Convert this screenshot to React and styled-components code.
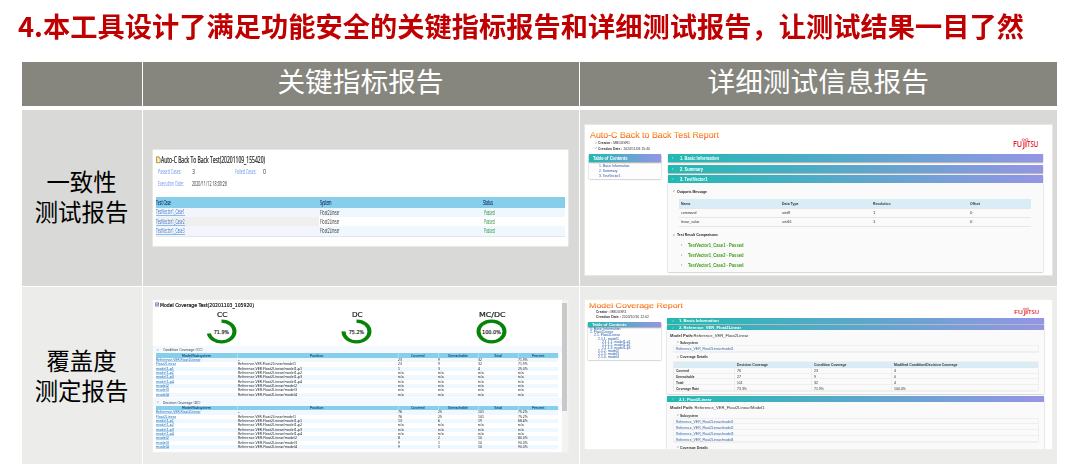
import React, { useLayoutEffect, useRef, useState } from 'react';
import styled, { createGlobalStyle } from 'styled-components';

const GlobalStyle = createGlobalStyle`
  * { box-sizing: border-box; }
  body {
    margin: 0;
    background: #fff;
    font-family: "Liberation Sans", "Noto Sans CJK SC", sans-serif;
    overflow: hidden;
  }
`;

const Holder = styled.span`
  display: block;
  flex: none;
  width: ${p => p.$w}px;
  height: 1.2em;
  line-height: 1.2;
  white-space: pre;
`;

const Inner = styled.span`
  display: block;
  width: max-content;
  font-size: 4em;
  transform-origin: 0 0;
`;

// text set at four times its size, then scaled down to fill a given width
const Fit = ({ w, children, className }) => {
  const ref = useRef(null);
  const [scale, setScale] = useState(0.25);
  useLayoutEffect(() => {
    ref.current.style.transform = 'none';
    const real = ref.current.getBoundingClientRect().width;
    if (real) {
      ref.current.style.transform = `scale(${w / real}, 0.25)`;
      setScale(w / real);
    }
  }, [w]);
  return (
    <Holder $w={w} className={className}>
      <Inner ref={ref} style={{ transform: `scale(${scale}, 0.25)` }}>
        {children}
      </Inner>
    </Holder>
  );
};

const Page = styled.main`
  width: 1080px;
  height: 467px;
  padding-left: 21.5px;
`;

const Title = styled.h1`
  display: flex;
  align-items: center;
  height: 62px;
  margin: 0 0 0 -4px;
  padding-bottom: 12px;
  color: #c00000;
  font: bold 27px "Noto Sans CJK SC", sans-serif;
`;

const Board = styled.div`
  display: grid;
  width: 1035.5px;
  grid-template-columns: 120px 436px 477.5px;
  column-gap: 1px;
  row-gap: 1px;
`;

const HeadBoard = styled(Board)`
  grid-template-rows: 43.5px;
  margin-bottom: 4.9px;
`;

const BodyBoard = styled(Board)`
  grid-template-rows: 175.3px 177.5px;
`;

const Head = styled.div`
  display: flex;
  justify-content: center;
  padding-top: 2px;
  background: #86867e;
  color: #fff;
  font: 27.7px/33px "Noto Sans CJK SC", sans-serif;
`;

const Cell = styled.div`
  background: ${p => (p.$light ? '#ececea' : '#d9d9d7')};
  padding: ${p => p.$pad || 0};
`;

const Label = styled(Cell)`
  display: flex;
  flex-direction: column;
  align-items: center;
  gap: 2px;
  color: #000;
  font: 23.4px/28px "Noto Sans CJK SC", sans-serif;
`;

const Sheet = styled.section`
  width: ${p => p.$w}px;
  height: ${p => p.$h}px;
  background: #fff;
  overflow: hidden;
  box-shadow: 0 0 0 0.6px #f1f1f1;
`;

const Line = styled.div`
  display: flex;
  align-items: center;
  height: ${p => p.$h}px;
  padding-left: ${p => p.$x || 0}px;
  margin-top: ${p => p.$mt || 0}px;
  font-size: ${p => p.$size || 5}px;
  font-weight: ${p => (p.$bold ? 'bold' : 'normal')};
  color: ${p => p.$color || '#333'};
  background: ${p => p.$bg || 'none'};
`;

const Cols = styled(Line)`
  display: grid;
  grid-template-columns: ${p => p.$cols};
`;

/* ---------- back to back test ---------- */

const CaseSheet = styled(Sheet)`
  font-family: "Open Sans", "Noto Sans", sans-serif;
`;

const CaseTitle = styled(Line)`
  gap: 0.6px;
  -webkit-text-stroke: 0.9px #1d1d1d;
`;

const CaseTable = styled.div`
  width: 409.5px;
  margin: 6.7px 0 0 2.5px;
  border-bottom: 1px solid #e3e6ea;
`;

const CaseHead = styled(Cols)`
  -webkit-text-stroke: 0.5px #142b62;
`;

const CaseLink = styled(Fit)`
  height: 8px;
  color: #3575c8;
  border-bottom: 0.7px solid #8cbbe8;
`;

const CaseName = styled.div`
  display: flex;
  align-items: center;
  height: 100%;
  padding-left: 0.5px;
  background: ${p => p.$bg};
`;

const Passed = styled(Fit)`
  color: #2f8d3a;
`;

const Value = styled(Fit)`
  color: #333;
`;

const BackToBack = () => (
  <CaseSheet $w={414.5} $h={96}>
    <CaseTitle $h={13} $mt={3.7} $x={2.5} $size={8.4} $color="#1d1d1d">
      <svg width="5" height="7.5" viewBox="0 0 5.5 8">
        <path d="M.5.8h2.7L4.6 2.4v4.8H.5z" fill="#fff6c8" stroke="#8d7430" strokeWidth=".8" />
        <path d="M1 1v6M3 1v1.7h1.5" stroke="#c9a83c" strokeWidth=".6" fill="none" />
      </svg>
      <Fit w={104}>Auto-C Back To Back Test(20201109_155420)</Fit>
    </CaseTitle>
    <Cols $h={12} $x={5} $size={6.3} $color="#6c97ea" $cols="34px 43px 28px 20px">
      <Fit w={23.5}>Passed Cases:</Fit>
      <Value w={3}>3</Value>
      <Fit w={21.5}>Failed Cases:</Fit>
      <Value w={3}>0</Value>
    </Cols>
    <Cols $h={12} $x={5} $size={6.3} $color="#6c97ea" $cols="34px 60px">
      <Fit w={26}>Execution Date:</Fit>
      <Value w={35}>2020/11/12 18:00:26</Value>
    </Cols>
    <CaseTable>
      <CaseHead $h={10.7} $bg="#87ceeb" $size={6.3} $color="#142b62" $cols="164px 163.5px 80px">
        <Fit w={15}>Test Case</Fit>
        <Fit w={11.5}>System</Fit>
        <Fit w={10}>Status</Fit>
      </CaseHead>
      {[1, 2, 3].map(n => (
        <Cols
          key={n}
          $h={9.4}
          $size={6.3}
          $bg={n === 2 ? '#fff' : '#eff7ff'}
          $cols="163px 1.5px 163.5px 80px"
        >
          <CaseName $bg={n === 2 ? '#efefef' : '#f2f5fb'}>
            <CaseLink w={28.5}>{`TestVector1_Case${n}`}</CaseLink>
          </CaseName>
          <span />
          <Fit w={19.5}>Float2Linear</Fit>
          <Passed w={10.7}>Passed</Passed>
        </Cols>
      ))}
    </CaseTable>
  </CaseSheet>
);

/* ---------- html report parts ---------- */

const ReportTop = styled.div`
  display: flex;
  justify-content: space-between;
  height: ${p => p.$h}px;
  padding: ${p => p.$pad};
`;

const TitleText = styled(Fit)`
  & > span {
    color: transparent;
    background: linear-gradient(#ffc02c 22%, #f4501c 78%);
    background-clip: text;
    -webkit-background-clip: text;
    -webkit-text-stroke: 0.6px transparent;
  }
`;

const ReportBody = styled.div`
  display: flex;
  align-items: flex-start;
  gap: ${p => p.$gap}px;
  padding-left: ${p => p.$x}px;
`;

const Toc = styled.nav`
  flex: none;
  width: ${p => p.$w}px;
  height: ${p => p.$h}px;
  background: #fdfdfd;
  box-shadow: 0 0.5px 1.5px rgba(0, 0, 0, 0.4);
`;

const Bar = styled(Line)`
  color: #fff;
  font-weight: bold;
  background: linear-gradient(90deg, #20bab2, #9595e5);
  box-shadow: 0 0.5px 1.2px rgba(0, 0, 0, 0.35);
`;

const Content = styled.div`
  flex: none;
  width: ${p => p.$w}px;
`;

const Fold = styled.div`
  height: ${p => p.$h}px;
  background: #fafafa;
  box-shadow: 0 0.5px 1.5px rgba(0, 0, 0, 0.4);
`;

const Chevron = ({ open, gap = 3 }) => (
  <svg width={4 + gap} height="4" viewBox={`0 0 ${4 + gap} 4`}>
    <path
      d={open ? 'M.9 1.6 1.8 2.4 2.7 1.6' : 'M1.2 1 2.1 2l-.9 1'}
      fill="none"
      stroke="currentColor"
      strokeWidth=".4"
    />
  </svg>
);

const LogoSvg = styled.svg`
  overflow: visible;
`;

const LogoText = styled.text`
  font: 600 8px "Open Sans", sans-serif;
  fill: #e5232f;
`;

const Logo = ({ height }) => (
  <LogoSvg width="26" height={height} viewBox="0 0 26 13" preserveAspectRatio="none">
    <LogoText x="0" y="10.2" textLength="9.2" lengthAdjust="spacingAndGlyphs">FU</LogoText>
    <path d="M10.9 4.6v6q0 1.5-1.6 1.4M13 4.6v5.6" fill="none" stroke="#e5232f" strokeWidth="1.1" />
    <LogoText x="14" y="10.2" textLength="11.3" lengthAdjust="spacingAndGlyphs">TSU</LogoText>
    <path
      d="M12 2.9C10.8 1 9 1.9 9.1 3s2 1.4 2.9-.1c1-2.2 3.4-1.5 3 .1s-1.9 1-3-.1"
      fill="none"
      stroke="#e5232f"
      strokeWidth=".6"
    />
  </LogoSvg>
);

const Grid = styled.div`
  width: ${p => p.$w}px;
  margin-left: ${p => p.$x}px;
`;

const GridRow = styled(Cols)`
  border-bottom: 0.6px solid #e6e6e6;
`;

const portCols = '101.3px 90.5px 97.5px 50px';

const ports = [
  ['command', 15.5, 'uint8', 8],
  ['linear_value', 18.5, 'uint16', 9.5]
];

const TestReport = () => (
  <Sheet $w={466.7} $h={150.5}>
    <ReportTop $h={29.5} $pad="4px 12.5px 0 5px">
      <div>
        <Line $h={11.5} $size={9.6}>
          <TitleText w={129}>Auto-C Back to Back Test Report</TitleText>
        </Line>
        <Line $h={5.5} $x={4} $size={4.4}>
          <Chevron open gap={0} />
          <Fit w={32}><b>Creator :</b> MBDUSR1</Fit>
        </Line>
        <Line $h={5.5} $x={4} $size={4.4}>
          <Chevron open gap={0} />
          <Fit w={52}><b>Creation Date :</b> 2020/11/08 15:40</Fit>
        </Line>
      </div>
      <Line $h={13} $mt={8}>
        <Logo height={13} />
      </Line>
    </ReportTop>
    <ReportBody $x={4} $gap={6.5}>
      <Toc $w={72.3} $h={25}>
        <Bar $h={8} $x={3.7} $size={5}><Fit w={34.5}>Table of Contents</Fit></Bar>
        <Line $h={4.8} $x={10} $mt={1.5} $size={4.4} $color="#2f519b"><Fit w={30.5}>1. Basic Information</Fit></Line>
        <Line $h={4.8} $x={10} $size={4.4} $color="#2f519b"><Fit w={18.5}>2. Summary</Fit></Line>
        <Line $h={4.8} $x={10} $size={4.4} $color="#2f519b"><Fit w={21.5}>3. TestVector1</Fit></Line>
      </Toc>
      <Content $w={375.3}>
        <Bar $h={8.3} $x={3.5} $size={5.2}><Chevron gap={4.6} /><Fit w={39}>1. Basic Information</Fit></Bar>
        <Bar $h={8.3} $x={3.5} $mt={2.2} $size={5.2}><Chevron gap={4.6} /><Fit w={23}>2. Summary</Fit></Bar>
        <Bar $h={8.3} $x={3.5} $mt={2.2} $size={5.2}><Chevron open gap={4.6} /><Fit w={27.5}>3. TestVector1</Fit></Bar>
        <Fold $h={89}>
          <Line $h={15.5} $x={4} $size={4.4} $bold $color="#222">
            <Chevron open gap={1} /><Fit w={30}>Outports Message</Fit>
          </Line>
          <Line $h={0.4} />
          <Grid $w={351.5} $x={11.3}>
            <GridRow $h={9.7} $x={1.7} $bg="#d9edf7" $size={4.4} $bold $cols={portCols}>
              <Fit w={9.5}>Name</Fit>
              <Fit w={16.5}>Data Type</Fit>
              <Fit w={17.5}>Resolution</Fit>
              <Fit w={10}>Offset</Fit>
            </GridRow>
            {ports.map(([name, nw, type, tw]) => (
              <GridRow key={name} $h={9} $x={1.7} $size={4.4} $cols={portCols}>
                <Fit w={nw}>{name}</Fit>
                <Fit w={tw}>{type}</Fit>
                <Fit w={2.4}>1</Fit>
                <Fit w={2.4}>0</Fit>
              </GridRow>
            ))}
          </Grid>
          <Line $h={8} $x={4} $mt={4} $size={4.4} $bold $color="#222">
            <Chevron open gap={1} /><Fit w={41}>Test Result Comparisons</Fit>
          </Line>
          {[1, 2, 3].map(n => (
            <Line key={n} $h={10.1} $x={12} $mt={n === 1 ? 1.2 : 0} $size={5.2} $bold $color="#3f9a16">
              <Chevron gap={3.7} />
              <Fit w={55.5}>{`TestVector1_Case${n} - Passed`}</Fit>
            </Line>
          ))}
        </Fold>
      </Content>
    </ReportBody>
  </Sheet>
);

/* ---------- coverage ---------- */

const CoverSheet = styled(Sheet)`
  display: flex;
  font-family: "DejaVu Sans", sans-serif;
`;

const CoverMain = styled.div`
  width: 408.7px;
`;

const CoverTitle = styled(Line)`
  -webkit-text-stroke: 0.7px #111;
`;

const Gauges = styled.div`
  display: grid;
  grid-template-columns: 135px 135px 135px;
  margin-left: 1.3px;
  height: 37px;
`;

const Gauge = styled.div`
  display: flex;
  flex-direction: column;
  align-items: center;
  gap: 1.2px;
  padding-top: 0.5px;
  color: #222;
  font: 7px "DejaVu Sans", sans-serif;
  -webkit-text-stroke: 0.8px #222;
`;

const Percent = styled.text`
  font: 5.4px "DejaVu Sans", sans-serif;
  fill: #222;
  stroke: #222;
  stroke-width: 0.2px;
  -webkit-text-stroke: 0;
  text-anchor: middle;
`;

const Ring = ({ value }) => (
  <svg width="31" height="25" viewBox="0 0 31 25">
    <g transform="translate(15.5 12.5) scale(1.26 1)">
      <circle
        r="10.3"
        fill="none"
        stroke="#078407"
        strokeWidth="3.2"
        pathLength="100"
        strokeDasharray={`${value} 100`}
        transform="rotate(-90)"
      />
    </g>
    <Percent x="15.5" y="14.5" textLength={value === 100 ? 19 : 15.5} lengthAdjust="spacingAndGlyphs">
      {value.toFixed(1)}%
    </Percent>
  </svg>
);

const CoverTable = styled.div`
  width: 402px;
  margin-left: 3px;
`;

const CoverHead = styled.div`
  display: grid;
  grid-template-columns: 80.5px 161px 40px 40px 40px 40.5px;
  height: 4.6px;
  background: #87ceeb;
  color: #133970;
  font-size: 3.6px;
  -webkit-text-stroke: 0.3px #133970;
`;

const HeadCell = styled.div`
  display: flex;
  align-items: center;
  justify-content: center;
  box-shadow: 0.5px 0 #cfeaf6;
`;

const Anchor = styled(Fit)`
  color: #1770b8;
  & > span {
    text-decoration: underline;
    text-decoration-thickness: 1.2px;
  }
`;

const Scroll = styled.div`
  width: 5.8px;
  padding: 3.5px 0.6px;
  background: #f3f3f3;
`;

const Thumb = styled.div`
  height: 108px;
  background: #c9c9c9;
`;

const modules = [
  ['Reference.VER.Float2Linear', 44.5, '-', 1.5],
  ['Float2Linear', 20, 'Reference.VER.Float2Linear/model1', 58],
  ['model1-p1', 18, 'Reference.VER.Float2Linear/model1-p1', 64],
  ['model1-p2', 18, 'Reference.VER.Float2Linear/model1-p2', 64],
  ['model1-p3', 18, 'Reference.VER.Float2Linear/model1-p3', 64],
  ['model1-p4', 18, 'Reference.VER.Float2Linear/model1-p4', 64],
  ['model2', 13, 'Reference.VER.Float2Linear/model2', 59],
  ['model3', 13, 'Reference.VER.Float2Linear/model3', 59],
  ['model4', 13, 'Reference.VER.Float2Linear/model4', 59]
];

const na = ['n/a', 'n/a', 'n/a', 'n/a'];

const condition = [
  ['23', '9', '32', '71.9%'],
  ['23', '9', '32', '71.9%'],
  ['1', '3', '4', '25.0%'],
  na, na, na, na, na, na
];

const decision = [
  ['76', '25', '101', '75.2%'],
  ['76', '25', '101', '75.2%'],
  ['13', '6', '19', '68.4%'],
  na, na, na,
  ['8', '2', '10', '80.0%'],
  ['9', '1', '10', '90.0%'],
  ['9', '1', '10', '90.0%']
];

const numWidth = { 1: 2, 2: 4, 3: 6, 5: 9.7 };

const heads = [
  ['Model/Subsystem', 29], ['Position', 13.5], ['Covered', 13.5],
  ['Unreachable', 20], ['Total', 8], ['Percent', 12.5]
];

const Coverage = ({ rows }) => (
  <CoverTable>
    <CoverHead>
      {heads.map(([name, w]) => (
        <HeadCell key={name}><Fit w={w}>{name}</Fit></HeadCell>
      ))}
    </CoverHead>
    {rows.map((row, i) => (
      <Cols
        key={i}
        $h={4.34}
        $size={3.5}
        $color="#222"
        $bg={i % 2 ? '#fff' : '#eff7ff'}
        $cols="82px 160px 40px 40px 40px 40px"
      >
        <Anchor w={modules[i][1]}>{modules[i][0]}</Anchor>
        <Fit w={modules[i][3]}>{modules[i][2]}</Fit>
        {row.map((v, n) => (
          <Fit key={n} w={v === 'n/a' ? 5.7 : numWidth[v.length]}>{v}</Fit>
        ))}
      </Cols>
    ))}
  </CoverTable>
);

const CoverageTest = () => (
  <CoverSheet $w={414.5} $h={152}>
    <CoverMain>
      <CoverTitle $h={9} $mt={0.7} $x={2} $size={5} $color="#111">
        <svg width="5" height="5" viewBox="0 0 5 5">
          <path d="M.5.8h3v3.4h-3z" fill="#e9e0f5" stroke="#67518c" strokeWidth=".6" />
          <path d="m1 2.3.8.9 2-2.2" fill="none" stroke="#67518c" strokeWidth=".6" />
        </svg>
        <Fit w={94}>Model Coverage Test(20201103_105920)</Fit>
      </CoverTitle>
      <Gauges>
        <Gauge><Fit w={10.5}>CC</Fit><Ring value={71.9} /></Gauge>
        <Gauge><Fit w={10.7}>DC</Fit><Ring value={75.2} /></Gauge>
        <Gauge><Fit w={26.5}>MC/DC</Fit><Ring value={100} /></Gauge>
      </Gauges>
      <Line $h={7.2} $x={3} $size={4} $bg="#f3f9ff">
        <Chevron open gap={3} /><Fit w={39.5}>Condition Coverage (CC)</Fit>
      </Line>
      <Coverage rows={condition} />
      <Line $h={7.4} $x={3} $mt={1.4} $size={4} $bg="#f3f9ff">
        <Chevron open gap={3} /><Fit w={37.5}>Decision Coverage (DC)</Fit>
      </Line>
      <Coverage rows={decision} />
    </CoverMain>
    <Scroll><Thumb /></Scroll>
  </CoverSheet>
);

const toc = [
  ['1. Basic Information', 0, 30.5],
  ['2. Float2Linear', 0, 23],
  ['2.1. Float2Linear', 4, 26],
  ['2.1.1. model1', 8, 21],
  ['2.1.1.1. model1-p1', 12, 28.5],
  ['2.1.1.2. model1-p2', 12, 28.5],
  ['2.1.1.3. model1-p3', 12, 28.5],
  ['2.1.2. model2', 8, 21],
  ['2.1.3. model3', 8, 21],
  ['2.1.4. model4', 8, 21]
];

const details = [
  ['Covered', 13, '76', '23', '4'],
  ['Unreachable', 18.5, '27', '9', '0'],
  ['Total', 7.5, '101', '32', '4'],
  ['Coverage Rate', 23, '73.3%', '71.9%', '100.0%']
];

const detailWidth = { 1: 2, 2: 4, 3: 5.5, 5: 10, 6: 12 };

const Frame = styled.div`
  width: 364px;
  margin-left: 6.7px;
  box-shadow: 0 0 0 0.5px #e6e6e6;
`;

const FrameRow = styled(Cols)`
  box-shadow: inset 0 -0.5px #e3e3e3;
`;

const DetailCell = styled.div`
  display: flex;
  align-items: center;
  height: 100%;
  padding-left: 2px;
  box-shadow: -0.5px 0 #e6e6e6;
`;

const detailCols = '60.8px 77px 80.2px 145px';

const CoverageReport = () => (
  <Sheet $w={466.7} $h={149}>
    <ReportTop $h={18} $pad="1.2px 11.5px 0 4px">
      <div>
        <Line $h={8.4} $size={7}>
          <TitleText w={94}>Model Coverage Report</TitleText>
        </Line>
        <Line $h={4.8} $x={7} $mt={-0.7} $size={3.8}>
          <Fit w={30.5}><b>Creator :</b> MBDUSR1</Fit>
        </Line>
        <Line $h={4.8} $x={7} $size={3.8}>
          <Fit w={53}><b>Creation Date :</b> 2020/10/10 12:02</Fit>
        </Line>
      </div>
      <Line $h={9} $mt={5.5}>
        <Logo height={9} />
      </Line>
    </ReportTop>
    <ReportBody $x={2.7} $gap={6.3}>
      <Content $w={73}>
        <Line $h={3.7} />
        <Toc $w={73} $h={38.3}>
          <Bar $h={5.3} $x={3.8} $size={4}><Fit w={34.5}>Table of Contents</Fit></Bar>
          {toc.map(([name, x, w], i) => (
            <Line key={name} $h={3.14} $mt={i ? 0 : 0.7} $x={2.5 + x} $size={3.3} $color="#245ca8">
              <Fit w={w}>{name}</Fit>
            </Line>
          ))}
        </Toc>
      </Content>
      <Content $w={377}>
        <Bar $h={5.7} $x={3.5} $size={4}><Chevron open gap={4.6} /><Fit w={39.7}>1. Basic Information</Fit></Bar>
        <Bar $h={5.5} $x={3.5} $mt={1.4} $size={4}><Chevron open gap={4.6} /><Fit w={62}>2. Reference_VER_Float2Linear</Fit></Bar>
        <Fold $h={64}>
          <Line $h={9.5} $x={2.5} $size={4.2}>
            <Fit w={78.5}><b>Model Path:</b>Reference_VER_Float2Linear</Fit>
          </Line>
          <Line $h={5} $x={9} $size={3.8} $bold><Chevron open gap={0} /><Fit w={18}>Subsystem</Fit></Line>
          <Line $h={0.8} />
          <Frame>
            <FrameRow $h={6} $x={2} $size={3.8} $color="#2f64ad" $cols="1fr">
              <Fit w={57.5}>Reference_VER_Float2Linear/model1</Fit>
            </FrameRow>
          </Frame>
          <Line $h={10} $x={9} $size={3.8} $bold><Chevron open gap={0} /><Fit w={28}>Coverage Details</Fit></Line>
          <Frame>
            <FrameRow $h={5.9} $size={3.8} $bold $bg="#d9edf7" $cols={detailCols}>
              <DetailCell />
              <DetailCell><Fit w={31}>Decision Coverage</Fit></DetailCell>
              <DetailCell><Fit w={32.5}>Condition Coverage</Fit></DetailCell>
              <DetailCell><Fit w={63.5}>Modified Condition/Decision Coverage</Fit></DetailCell>
            </FrameRow>
            {details.map(([name, w, ...vals]) => (
              <FrameRow key={name} $h={5.9} $size={3.8} $cols={detailCols}>
                <DetailCell><Fit w={w}><b>{name}</b></Fit></DetailCell>
                {vals.map((v, i) => (
                  <DetailCell key={i}><Fit w={detailWidth[v.length]}>{v}</Fit></DetailCell>
                ))}
              </FrameRow>
            ))}
          </Frame>
        </Fold>
        <Bar $h={5.4} $x={3.5} $mt={2} $size={4}><Chevron open gap={4.6} /><Fit w={32.5}>2.1. Float2Linear</Fit></Bar>
        <Fold $h={60}>
          <Line $h={11} $x={2.5} $size={4.2}>
            <Fit w={94.5}><b>Model Path:</b> Reference_VER_Float2Linear/Model1</Fit>
          </Line>
          <Line $h={5} $x={9} $size={3.8} $bold><Chevron open gap={0} /><Fit w={18}>Subsystem</Fit></Line>
          <Line $h={0.8} />
          <Frame>
            {[1, 2, 3, 4].map(n => (
              <FrameRow key={n} $h={5.85} $x={2} $size={3.8} $color="#2f64ad" $cols="1fr">
                <Fit w={57.5}>{`Reference_VER_Float2Linear/model${n}`}</Fit>
              </FrameRow>
            ))}
          </Frame>
          <Line $h={10} $x={9} $size={3.8} $bold><Chevron open gap={0} /><Fit w={28}>Coverage Details</Fit></Line>
        </Fold>
      </Content>
    </ReportBody>
  </Sheet>
);

const App = () => (
  <Page>
    <GlobalStyle />
    <Title><Fit w={1006}>4.本工具设计了满足功能安全的关键指标报告和详细测试报告，让测试结果一目了然</Fit></Title>
    <HeadBoard>
      <Head />
      <Head>关键指标报告</Head>
      <Head>详细测试信息报告</Head>
    </HeadBoard>
    <BodyBoard>
      <Label $pad="56.6px 0 0"><span>一致性</span><span>测试报告</span></Label>
      <Cell $pad="39.2px 0 0 10.7px"><BackToBack /></Cell>
      <Cell $pad="14.3px 0 0 5.7px"><TestReport /></Cell>
      <Label $light $pad="59.5px 0 0"><span>覆盖度</span><span>测定报告</span></Label>
      <Cell $light $pad="12.9px 0 0 10.7px"><CoverageTest /></Cell>
      <Cell $light $pad="13.2px 0 0 5.7px"><CoverageReport /></Cell>
    </BodyBoard>
  </Page>
);

export default App;
